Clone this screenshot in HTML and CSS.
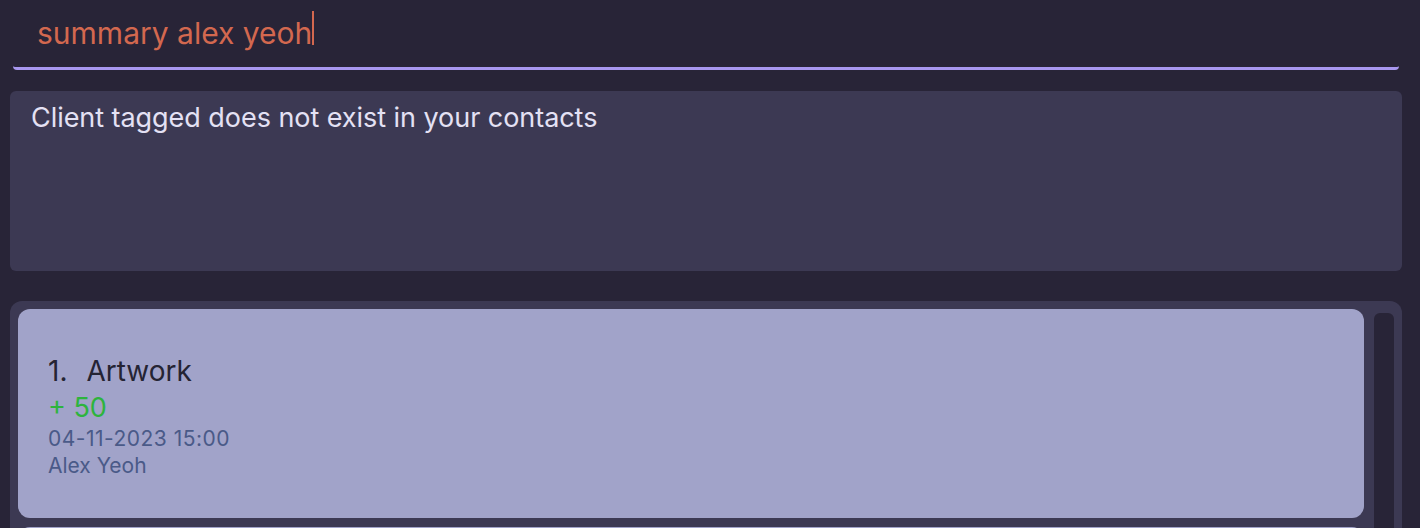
FILE: index.html
```html
<!DOCTYPE html>
<html>
<head>
<meta charset="utf-8">
<link rel="stylesheet" href="styles.css">
</head>
<body>
<div class="app">
  <div class="command">
    <span class="command-text">summary alex yeoh</span><span class="caret"></span>
  </div>
  <div class="result">Client tagged does not exist in your contacts</div>
  <div class="list-panel">
    <div class="cards">
      <div class="card">
        <div class="card-title"><span class="idx">1.</span>Artwork</div>
        <div class="card-points">+ 50</div>
        <div class="card-date">04-11-2023 15:00</div>
        <div class="card-name">Alex Yeoh</div>
      </div>
      <div class="card"></div>
    </div>
    <div class="scroll-track"></div>
  </div>
</div>
</body>
</html>
```
FILE: styles.css
```css
html, body {
  margin: 0;
  padding: 0;
  background: #282437;
  font-family: Inter, "Noto Sans", sans-serif;
  overflow: hidden;
}
.app {
  width: 1420px;
  height: 528px;
  display: flex;
  flex-direction: column;
  overflow: hidden;
}
.command {
  flex: 0 0 auto;
  margin: 0 21px 0 13px;
  height: 70px;
  box-sizing: border-box;
  border-bottom: 3px solid #a897ef;
  border-radius: 0 0 4px 4px;
  padding-left: 24px;
  display: flex;
  align-items: flex-start;
}
.command-text {
  margin-top: 16px;
  color: #d3684f;
  font-size: 30px;
  line-height: 34px;
}
.caret {
  margin-top: 11px;
  width: 2px;
  height: 34px;
  background: #d3684f;
}
.result {
  flex: 0 0 auto;
  margin: 21px 18px 0 10px;
  height: 180px;
  box-sizing: border-box;
  background: #3c3953;
  border-radius: 6px;
  padding: 10px 21px;
  color: #e4e1f4;
  font-size: 27px;
  line-height: 34px;
  letter-spacing: -0.05px;
}
.list-panel {
  margin: 30px 18px 0 10px;
  flex: 1;
  background: #3c3953;
  border-radius: 12px 12px 0 0;
  padding: 8px 8px 0 8px;
  display: flex;
  gap: 10px;
  min-height: 0;
}
.cards {
  flex: 1;
  display: flex;
  flex-direction: column;
  gap: 9px;
}
.card {
  flex: 0 0 209px;
  box-sizing: border-box;
  background: #a1a3c9;
  border-radius: 12px;
  padding: 44px 30px 0 30px;
}
.card-title {
  color: #252433;
  font-size: 28px;
  line-height: 37px;
}
.idx {
  margin-right: 19px;
}
.card-points {
  color: #2db43d;
  font-size: 27px;
  line-height: 36px;
}
.card-date {
  color: #4a5a88;
  font-size: 21px;
  line-height: 26px;
  letter-spacing: 0.5px;
}
.card-name {
  color: #4a5a88;
  font-size: 21px;
  line-height: 28px;
}
.scroll-track {
  width: 20px;
  margin-top: 4px;
  background: #282437;
  border-radius: 6px 6px 0 0;
}
```
